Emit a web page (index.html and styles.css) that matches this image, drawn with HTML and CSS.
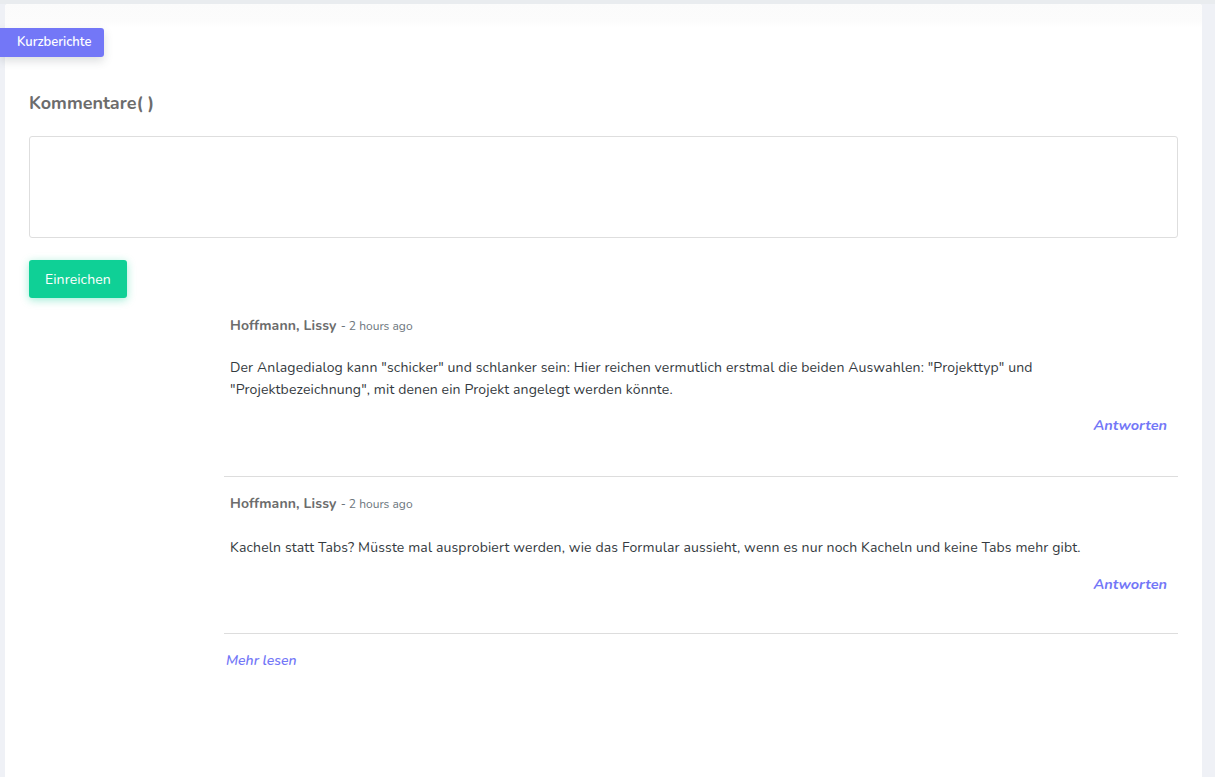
FILE: index.html
```html
<!DOCTYPE html>
<html lang="de">
<head>
<meta charset="utf-8">
<title>Kurzberichte</title>
<link rel="stylesheet" href="styles.css">
</head>
<body>
<div class="page">
  <div class="card">
    <div class="card-head">
      <span class="badge">Kurzberichte</span>
    </div>
    <div class="card-body">
      <h3 class="title">Kommentare( )</h3>
      <textarea class="input"></textarea>
      <button class="submit" type="button">Einreichen</button>
      <div class="comments">
        <div class="comment">
          <div class="meta"><span class="author">Hoffmann, Lissy</span> <span class="time">- 2 hours ago</span></div>
          <p class="text">Der Anlagedialog kann "schicker" und schlanker sein: Hier reichen vermutlich erstmal die beiden Auswahlen: "Projekttyp" und "Projektbezeichnung", mit denen ein Projekt angelegt werden könnte.</p>
          <div class="actions"><a class="reply">Antworten</a></div>
        </div>
        <div class="comment">
          <div class="meta"><span class="author">Hoffmann, Lissy</span> <span class="time">- 2 hours ago</span></div>
          <p class="text">Kacheln statt Tabs? Müsste mal ausprobiert werden, wie das Formular aussieht, wenn es nur noch Kacheln und keine Tabs mehr gibt.</p>
          <div class="actions"><a class="reply">Antworten</a></div>
        </div>
        <a class="more">Mehr lesen</a>
      </div>
    </div>
  </div>
</div>
</body>
</html>
```
FILE: styles.css
```css
html, body {
  margin: 0;
  padding: 0;
  background: #eff1f6;
  font-family: "Nunito", "Noto Sans", "Open Sans", sans-serif;
  color: #343a40;
}
.page {
  padding: 4px 13px 0 5px;
  background: linear-gradient(#e9ecef 0, #e9ecef 4px, #eff1f6 4px);
}
.card {
  background: #fff;
  border-radius: 3px 3px 0 0;
  min-height: 773px;
}
.card-head {
  height: 72px;
  box-sizing: border-box;
  padding-top: 24px;
  background: linear-gradient(#fbfbfb 0, #fcfcfc 18px, #fff 24px);
  border-radius: 3px 3px 0 0;
}
.badge {
  display: inline-block;
  margin-left: -5px;
  background: #7377f7;
  color: #fff;
  font-size: 13px;
  font-weight: 600;
  height: 29px;
  line-height: 29px;
  padding: 0 12px 0 17px;
  border-radius: 0 3px 3px 0;
  box-shadow: 0 4px 10px rgba(60,70,80,0.18);
}
.card-body {
  padding: 0 24px 40px 24px;
}
.title {
  margin: 15px 0 0 0;
  font-size: 18px;
  font-weight: 700;
  color: #6c6c6c;
  line-height: 24px;
}
.input {
  display: block;
  box-sizing: border-box;
  width: 100%;
  height: 102px;
  margin-top: 21px;
  border: 1px solid #dedede;
  border-radius: 3px;
  resize: none;
  outline: none;
}
.submit {
  margin-top: 22px;
  background: #0fd096;
  color: #fff;
  border: none;
  border-radius: 3px;
  height: 38px;
  padding: 0 16px;
  font-family: inherit;
  font-size: 14px;
  letter-spacing: 0.1px;
  box-shadow: 0 2px 8px rgba(15,208,150,0.4);
}
.comments {
  margin-left: 195px;
  margin-top: 14px;
}
.comment {
  border-bottom: 1px solid #dddddd;
  padding: 2px 11px 40px 6px;
  margin-bottom: 13px;
}
.comment + .comment {
  padding-bottom: 38px;
  margin-bottom: 15px;
}
.comment + .comment .text {
  margin-top: 22px;
}
.comment + .comment .actions {
  margin-top: 14px;
}
.meta {
  line-height: 22px;
}
.author {
  font-size: 14px;
  font-weight: 700;
  letter-spacing: 0.13px;
  color: #6c6c6c;
}
.time {
  font-size: 12px;
  color: #6c757d;
}
.text {
  margin: 20px 0 0 0;
  font-size: 14px;
  letter-spacing: 0.14px;
  line-height: 22px;
  color: #343a40;
}
.actions {
  text-align: right;
  margin-top: 13px;
}
.reply, .more {
  color: #7377f7;
  font-style: italic;
  font-weight: 600;
  font-size: 14px;
  line-height: 22px;
  cursor: pointer;
}
.reply {
  font-size: 14.5px;
  font-weight: 700;
}
.more {
  display: inline-block;
  margin-left: 2px;
}
```
